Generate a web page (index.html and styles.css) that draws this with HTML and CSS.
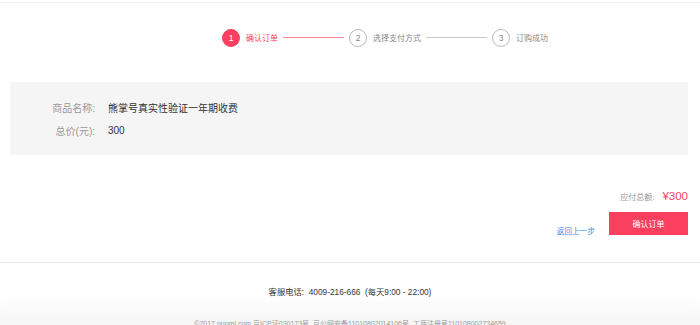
FILE: index.html
```html
<!DOCTYPE html>
<html lang="zh-CN">
<head>
    <meta charset="UTF-8">
    <title>确认订单</title>
    <link rel="stylesheet" href="styles.css">
</head>
<body>

<div class="topbar"></div>

<div class="steps">
    <span class="step-num active">1</span>
    <span class="step-text active">确认订单</span>
    <span class="step-line active"></span>
    <span class="step-num">2</span>
    <span class="step-text">选择支付方式</span>
    <span class="step-line"></span>
    <span class="step-num">3</span>
    <span class="step-text">订购成功</span>
</div>

<div class="order-info">
    <div class="info-row">
        <span class="info-label">商品名称:</span>
        <span class="info-value">熊掌号真实性验证一年期收费</span>
    </div>
    <div class="info-row">
        <span class="info-label">总价(元):</span>
        <span class="info-value">300</span>
    </div>
</div>

<div class="total">
    <span class="total-label">应付总额:</span>
    <span class="total-price">¥300</span>
</div>

<div class="actions">
    <a class="back-link" href="#">返回上一步</a>
    <button class="confirm-btn">确认订单</button>
</div>

<div class="footer">
    <p class="service">客服电话: &nbsp;4009-216-666 &nbsp;(每天9:00 - 22:00)</p>
    <div class="copyright">©2017 nuomi.com 京ICP证030173号 &nbsp;京公网安备11010802014106号 &nbsp;工商注册号110108002734659</div>
</div>

</body>
</html>
```

FILE: styles.css
```css
* {
    margin: 0;
    padding: 0;
    box-sizing: border-box;
}

body, html {
    width: 100%;
    height: 100%;
    overflow: hidden;
    font-family: "Liberation Sans", "Noto Sans CJK SC", sans-serif;
    background-color: #fff;
    color: #333;
}

.topbar {
    height: 3px;
    border-bottom: 1px solid #efefef;
}

/* Steps */
.steps {
    display: flex;
    align-items: center;
    height: 17px;
    margin-top: 26px;
    padding-left: 222px;
    font-size: 8px;
}

.step-num {
    width: 18px;
    height: 18px;
    border: 1px solid #bbb;
    border-radius: 50%;
    display: flex;
    justify-content: center;
    align-items: center;
    color: #888;
    font-size: 8.5px;
    background-color: #fff;
}

.step-num.active {
    border-color: #fb3f5e;
    background-color: #fb3f5e;
    color: #fff;
}

.step-text {
    margin-left: 6px;
    color: #888;
}

.step-text.active {
    color: #fb3f5e;
}

.step-line {
    width: 61px;
    height: 1px;
    margin: 0 5px;
    background-color: #c8c8c8;
}

.step-line.active {
    background-color: #f68a9b;
}

/* Order info */
.order-info {
    margin: 36px 12px 0 10px;
    padding: 14px 0 13px;
    background-color: #f5f5f5;
}

.info-row {
    display: flex;
    align-items: center;
    height: 23px;
}

.info-label {
    width: 85px;
    text-align: right;
    color: #999;
    font-size: 10px;
}

.info-value {
    margin-left: 13px;
    font-size: 10px;
    color: #333;
}

/* Total + actions */
.total {
    display: flex;
    justify-content: flex-end;
    align-items: baseline;
    margin-top: 35px;
    padding-right: 12px;
}

.total-label {
    font-size: 8px;
    color: #999;
}

.total-price {
    margin-left: 8px;
    font-size: 11.5px;
    color: #fb3f5e;
}

.actions {
    display: flex;
    justify-content: flex-end;
    align-items: flex-end;
    margin-top: 10px;
    padding-right: 12px;
}

.back-link {
    font-size: 7.7px;
    color: #3d8fe6;
    text-decoration: none;
    margin-right: 14px;
    margin-bottom: -1px;
}

.confirm-btn {
    width: 79px;
    height: 23px;
    border: none;
    background-color: #fb3f5e;
    color: #fff;
    font-family: inherit;
    font-size: 8px;
    cursor: pointer;
}

/* Footer */
.footer {
    margin-top: 27px;
    border-top: 1px solid #e6e6e6;
    text-align: center;
}

.service {
    margin-top: 22px;
    font-size: 8.3px;
    color: #333;
}

.copyright {
    margin-top: 10px;
    padding-top: 11px;
    height: 40px;
    font-size: 7px;
    color: #999;
    background: linear-gradient(#fbfbfb, #eeeeee);
    box-shadow: 0 -2px 12px rgba(0, 0, 0, 0.04);
}
```
